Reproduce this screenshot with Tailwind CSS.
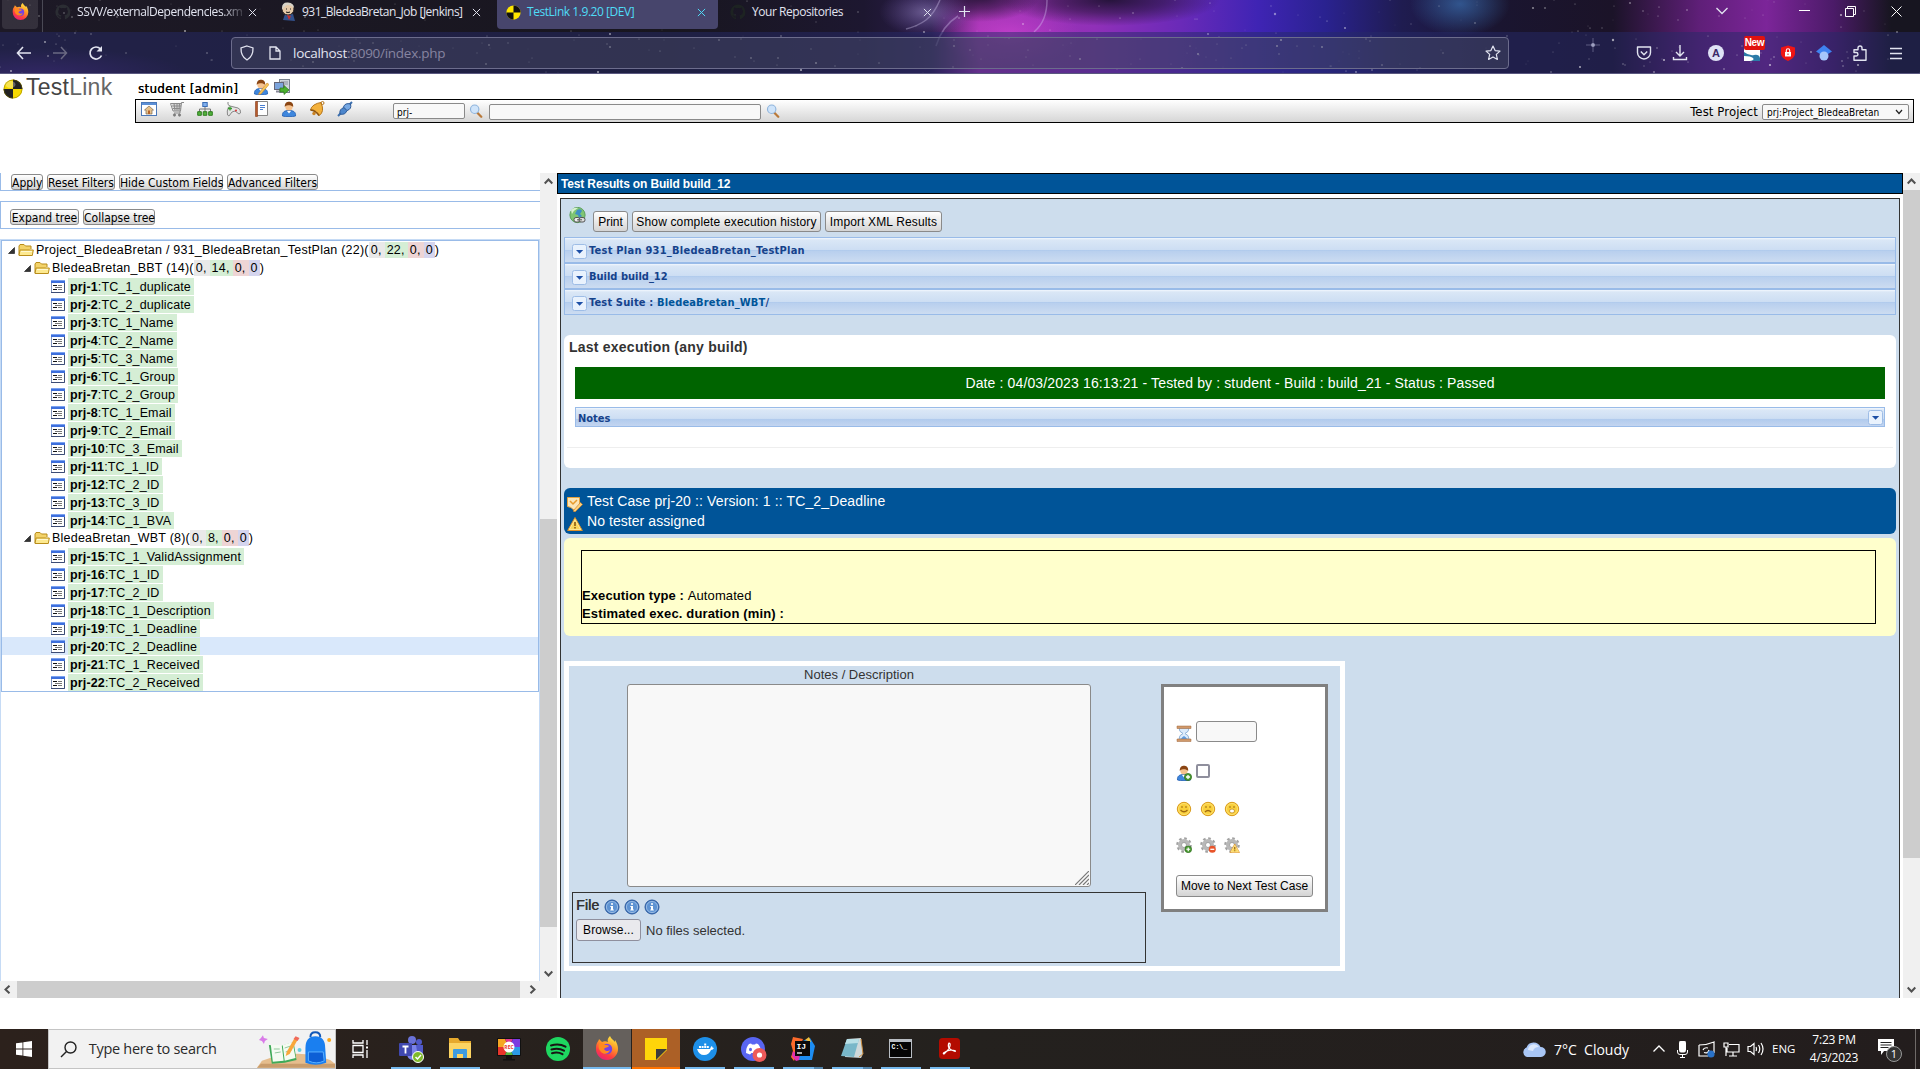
<!DOCTYPE html>
<html lang="en">
<head>
<meta charset="utf-8">
<title>TestLink 1.9.20 [DEV]</title>
<script src="https://cdn.jsdelivr.net/npm/@tailwindcss/browser@4"></script>
</head>
<body class="h-[1069px] w-[1920px] overflow-hidden bg-white font-['Liberation_Sans',Arial,sans-serif] text-black">
<svg class="absolute size-0">
  <defs><linearGradient id="ffg" x1=".8" y1="0" x2=".3" y2="1"><stop offset="0" stop-color="#fff04a"/><stop offset=".4" stop-color="#ff9a26"/><stop offset=".75" stop-color="#ff3d3f"/><stop offset="1" stop-color="#e5227b"/></linearGradient></defs>
  <symbol id="ff" viewBox="0 0 24 24"><path fill="url(#ffg)" d="M2 7c1-2 2-3 2-4 1 1 2 2 3 3 2-1 4-1 6 0-1-2 0-4 2-6 1 3 4 4 5 6V4c2 3 3 6 3 9a11 11 0 0 1-22 0c0-2 0-4 1-6z"/><circle cx="12" cy="13" r="5.200" fill="#7543e3"/><path fill="#ff8a1e" d="M4 8c3-1 5 0 6 1 2 0 3 0 4 1-1 2-4 1-5 3 1 2 4 3 6 1-1 4-6 5-9 2-2-2-3-5-2-8z"/></symbol>
  <symbol id="gh" viewBox="0 0 16 16"><path fill="currentColor" d="M8 .5a7.600 7.600 0 0 0-2.400 14.800c.4 0 .5-.2.5-.4v-1.400c-2.100.4-2.600-1-2.600-1-.3-.9-.8-1.100-.8-1.100-.7-.5 0-.5 0-.5.8 0 1.200.8 1.200.8.7 1.200 1.800.9 2.200.7 0-.5.3-.9.5-1-1.700-.3-3.400-.9-3.400-3.900 0-.8.3-1.500.8-2 0-.3-.3-1 .1-2.100 0 0 .6-.2 2.100.8a7 7 0 0 1 3.800 0c1.400-1 2-.8 2-.8.4 1.100.2 1.800.1 2.100.5.5.8 1.200.8 2 0 3-1.800 3.600-3.500 3.800.3.300.5.800.5 1.500v2c0 .3.100.500.500.400A7.600 7.600 0 0 0 8 .5z"/></symbol>
  <symbol id="tl" viewBox="0 0 20 20"><circle cx="10" cy="10" r="9.500" fill="#ffe600"/><path d="M10 10V.5A9.500 9.500 0 0 1 19.500 10zM10 10v9.500A9.500 9.500 0 0 1 .5 10z" fill="#111"/></symbol>
  <symbol id="tlx" viewBox="0 0 20 20"><circle cx="10" cy="10" r="9.500" fill="#f5d800"/><path d="M10 10V.5A9.500 9.500 0 0 1 19.500 10zM10 10v9.500A9.500 9.500 0 0 1 .5 10z" fill="#222"/><ellipse cx="7.500" cy="5.500" rx="5" ry="3.500" fill="#fff" opacity=".3"/><circle cx="10" cy="10" r="9" fill="none" stroke="#6d6100" stroke-opacity=".4"/></symbol>
  <symbol id="x" viewBox="0 0 10 10"><path d="M1 1l8 8M9 1l-8 8" stroke="currentColor" stroke-width="1.100" fill="none"/></symbol>
  <symbol id="user" viewBox="0 0 16 16"><path d="M1.500 15c-.5-4 2-5.500 6.500-5.500s7 1.500 6.500 5.500c-3 1-10 1-13 0z" fill="#3f87dd" stroke="#1d5bb0" stroke-width=".8"/><path d="M6 10l2 2.500 2-2.500z" fill="#fff"/><circle cx="8" cy="5.800" r="3.700" fill="#f6c28e"/><path d="M3.800 6C3.500 2 6 .8 8 .8s4.500 1 4.200 5.200C11 4.500 9 4 7 4.200 5.500 4.300 4.500 5 3.800 6z" fill="#8a4513"/></symbol>
  <symbol id="mag" viewBox="0 0 16 16"><path d="M9.500 10l4.500 4.500" stroke="#b9793a" stroke-width="2.600" stroke-linecap="round"/><circle cx="6.500" cy="6" r="4.800" fill="#cfe4fa" stroke="#8fb4dc" stroke-width="1.300"/></symbol>
  <symbol id="folder" viewBox="0 0 16 14"><path d="M1 12V3l1-1.500h4L7.500 3H13v3" fill="#f3d36a" stroke="#b98d1a"/><path d="M1 12.500l1-5.500h13.300l-1 5.500z" fill="#fde98f" stroke="#b98d1a"/><path d="M3 8.500h11" stroke="#fff8d0"/></symbol>
  <symbol id="leaf" viewBox="0 0 14 13"><path d="M.5.500h13v12H.5z" fill="#fff" stroke="#8295bd"/><path d="M0 0h14v1H0z" fill="#7ba2f0"/><path d="M0 1h14v2H0z" fill="#3d6fdc"/><path d="M13.500 3v9.500H0" fill="none" stroke="#3c4c75"/><path d="M2 5.500h4M2 9.500h4" stroke="#111"/><path d="M7 5.500h4M4 7.500h7M7 9.500h4" stroke="#777"/></symbol>
  <symbol id="tri" viewBox="0 0 7 7"><path d="M6.500.5v6h-6z" fill="#333" stroke="#111" stroke-width=".6"/></symbol>
  <symbol id="tool" viewBox="0 0 15 15"><rect x=".5" y=".5" width="14" height="14" rx="2" fill="#e9f2fd" stroke="#9ebde6"/><path d="M4 6h7.200L7.600 9.800z" fill="#1d4fa6"/></symbol>
  <symbol id="info" viewBox="0 0 16 16"><circle cx="8" cy="8" r="7" fill="#4a80c4" stroke="#2c5a9e"/><circle cx="8" cy="8" r="5.600" fill="#5e93d2" stroke="#a9c7ea" stroke-width=".8"/><path d="M7 4.200h2v1.600H7zM6.300 7H9v3.500h.8v1H6.300v-1H7V8h-.7z" fill="#fff"/></symbol>
  <symbol id="gear" viewBox="0 0 16 16"><g fill="none" stroke="#a2a2a2"><circle cx="8" cy="8" r="6.600" stroke-width="2.400" stroke-dasharray="2.600 2.580"/><circle cx="8" cy="8" r="4.300" stroke="#b8b8b8" stroke-width="3.400"/><circle cx="8" cy="8" r="2.500" stroke="#888" stroke-width=".7"/></g></symbol>
  <symbol id="face" viewBox="0 0 16 16"><circle cx="8" cy="8" r="6.700" fill="#f9cf3a" stroke="#d99a1b"/><circle cx="8" cy="8" r="5.500" fill="none" stroke="#fde37e" stroke-width=".8"/><path d="M6 5v2M10 5v2" stroke="#a87718" stroke-width="1.100"/></symbol>
  <symbol id="warn" viewBox="0 0 16 16"><path d="M8 1.500L15.300 14.500H.7z" fill="#fbd65a" stroke="#e0932a" stroke-linejoin="round"/><path d="M8 3.500L13.600 13.500H2.400z" fill="none" stroke="#fff0b5" stroke-width=".7"/><path d="M7.200 6h1.600v4H7.200zM7.200 11h1.600v1.400H7.200z" fill="#8a5a12"/></symbol>
  <symbol id="plus" viewBox="0 0 8 8"><circle cx="4" cy="4" r="3.600" fill="#4b9a32" stroke="#2e6d1d" stroke-width=".7"/><path d="M4 2v4M2 4h4" stroke="#fff" stroke-width="1.300"/></symbol>
</svg>

<!-- Browser chrome -->
<header class="relative h-[74px] w-full overflow-hidden bg-[#17151f] text-[#e2e4f0]">
  <svg class="absolute inset-0" width="1920" height="74">
    <defs>
      <linearGradient id="sky" x1="0" x2="1920" y1="0" y2="0" gradientUnits="userSpaceOnUse">
        <stop offset="0" stop-color="#1d1926"/><stop offset=".35" stop-color="#18161f"/><stop offset=".45" stop-color="#1d1730"/><stop offset=".485" stop-color="#2b1c4a"/><stop offset=".51" stop-color="#a235b0"/><stop offset=".57" stop-color="#9030b8"/><stop offset=".615" stop-color="#6a2ab8"/><stop offset=".655" stop-color="#3f24b4"/><stop offset=".69" stop-color="#2a2290"/><stop offset=".73" stop-color="#1f1c50"/><stop offset=".78" stop-color="#1a1530"/><stop offset=".84" stop-color="#1b1328"/><stop offset=".885" stop-color="#5f1f78"/><stop offset=".92" stop-color="#7c2599"/><stop offset=".955" stop-color="#4b1b68"/><stop offset=".985" stop-color="#171520"/></linearGradient>
      <radialGradient id="glow"><stop offset="0" stop-color="#d645d8" stop-opacity=".6"/><stop offset="1" stop-color="#c33bd0" stop-opacity="0"/></radialGradient>
      <radialGradient id="dusk"><stop offset="0" stop-color="#150f26" stop-opacity=".85"/><stop offset=".5" stop-color="#150f26" stop-opacity=".5"/><stop offset="1" stop-color="#150f26" stop-opacity="0"/></radialGradient>
      <radialGradient id="lilac"><stop offset="0" stop-color="#b9a8e8" stop-opacity=".45"/><stop offset="1" stop-color="#8b6fd0" stop-opacity="0"/></radialGradient>
      <radialGradient id="teal"><stop offset="0" stop-color="#3a6fb0" stop-opacity=".7"/><stop offset="1" stop-color="#3a6fb0" stop-opacity="0"/></radialGradient>
      <radialGradient id="violet"><stop offset="0" stop-color="#4a2a78" stop-opacity=".7"/><stop offset="1" stop-color="#4a2a78" stop-opacity="0"/></radialGradient>
    </defs>
    <rect width="1920" height="74" fill="url(#sky)"/>
    <ellipse cx="40" cy="74" rx="150" ry="26" fill="url(#violet)"/>
    <ellipse cx="1010" cy="34" rx="70" ry="34" fill="url(#glow)"/>
    <ellipse cx="1110" cy="0" rx="110" ry="26" fill="url(#dusk)"/>
    <ellipse cx="980" cy="-4" rx="60" ry="26" fill="url(#dusk)"/>
    <ellipse cx="925" cy="12" rx="46" ry="24" fill="url(#lilac)"/>
    <ellipse cx="1460" cy="4" rx="50" ry="32" fill="url(#teal)"/>
    <path d="M940 0q-6 14-14 20t-20 9M958 16q-16 10-22 30M1047 0q0 10-3 18t-10 14" stroke="#d9cdf5" stroke-opacity=".35" fill="none" stroke-width="1.500"/>
    <rect y="32" width="1920" height="42" fill="#252968" fill-opacity=".5"/>
    <g id="stars" fill="#fff"></g>
    <path d="M1593 38v14M1586 45h14" stroke="#cfd2ee" stroke-opacity=".35"/><circle cx="1593" cy="45" r="2" fill="#cfd2ee" opacity=".6"/>
    <rect y="73" width="1920" height="1" fill="#5a5880"/>
  </svg>
  <div class="relative flex h-8 items-start text-[12px] tracking-[-0.45px] font-['Open_Sans','Noto_Sans',sans-serif]">
    <div class="ml-[2px] flex h-[29px] w-9 items-center justify-center rounded-b bg-white/10 pb-[7px]"><svg width="17" height="17"><use href="#ff"/></svg></div>
    <div class="ml-1 h-8 w-px bg-[#4a4955]"></div>
    <div class="flex h-6 w-[225px] items-center pl-3"><svg class="text-[#2b2d33]" width="16" height="16"><use href="#gh"/></svg><span class="ml-[6px] w-[170px] whitespace-nowrap mask-r-from-85%">SSVV/externalDependencies.xm</span><svg class="ml-[1px]" width="9" height="9"><use href="#x"/></svg></div>
    <div class="flex h-6 w-[229px] items-center pl-[12px]">
      <svg width="16" height="20" viewBox="0 0 16 20"><path d="M3 18l2-6h8l2 7z" fill="#33518c"/><circle cx="8" cy="7" r="6" fill="#e6c9a8" stroke="#2b2320"/><path d="M2 6q0-6 6-5.500T14 6q-3-3-6-3T2 8z" fill="#d8d3c8"/><path d="M6 7h1M10 7h1M6 10q2 1 4 0" stroke="#222"/><path d="M7 13l4 1-2 4z" fill="#c9302c"/></svg>
      <span class="ml-[6px] w-[165px] tracking-[-0.5px] whitespace-nowrap">931_BledeaBretan_Job [Jenkins]</span><svg class="ml-[5px]" width="9" height="9"><use href="#x"/></svg></div>
    <div class="flex h-[29px] w-[221px] items-center rounded-b bg-[#47456c] pb-[5px] pl-[9px] text-[#4fdcf7]"><svg width="15" height="15"><use href="#tl"/></svg><span class="ml-[6px] w-[170px] whitespace-nowrap">TestLink 1.9.20 [DEV]</span><svg width="9" height="9"><use href="#x"/></svg></div>
    <div class="flex h-6 w-[225px] items-center pl-3"><svg class="text-[#1d2322]" width="16" height="16"><use href="#gh"/></svg><span class="ml-[6px] w-[171px] whitespace-nowrap">Your Repositories</span><svg width="9" height="9"><use href="#x"/></svg></div>
    <svg class="ml-[16px] mt-[6px]" width="11" height="11"><path d="M5.500 0v11M0 5.500h11" stroke="#e2e4f0" stroke-width="1.200"/></svg>
    <svg class="ml-[746px] mt-[7px]" width="12" height="8"><path d="M.5 1L6 6.500 11.500 1" fill="none" stroke="currentColor" stroke-width="1.300"/></svg>
    <svg class="ml-[71px] mt-[10px]" width="11" height="2"><path d="M0 .5h11" stroke="#fff"/></svg>
    <svg class="ml-[35px] mt-[6px]" width="11" height="11"><path d="M.5 2.500h8v8h-8zM2.500 2.500v-2h8v8h-2" fill="none" stroke="#fff"/></svg>
    <svg class="ml-[35px] mt-[6px]" width="11" height="11"><path d="M.5.500l10 10M10.500.500l-10 10" stroke="#fff"/></svg>
  </div>
  <div class="relative flex h-[42px] items-center">
    <svg class="ml-[16px]" width="15" height="14" fill="none" stroke="currentColor" stroke-width="1.600"><path d="M15 7H1.500M7 1L1.500 7 7 13"/></svg>
    <svg class="ml-[22px] text-[#6a6982]" width="15" height="14" fill="none" stroke="currentColor" stroke-width="1.500"><path d="M0 7h13.500M8 1l5.500 6L8 13"/></svg>
    <svg class="ml-[20px]" width="16" height="16" fill="none" stroke="currentColor" stroke-width="1.700"><path d="M13.500 10.500A6 6 0 1 1 12.500 4"/><path d="M14 1v5.500H8.500z" fill="currentColor" stroke="none"/></svg>
    <div class="ml-[127px] flex h-8 w-[1278px] items-center rounded-[4px] border border-[#6c6c8c] bg-[#4a4b63]/45 pl-[8px]">
      <svg width="14" height="16" viewBox="0 0 14 16" fill="none" stroke="currentColor" stroke-width="1.300"><path d="M7 1l6 2c.2 5-1 9-6 12C2 12 .8 8 1 3z"/></svg>
      <svg class="ml-[15px]" width="12" height="14" fill="none" stroke="currentColor" stroke-width="1.300"><path d="M1 1h6l4 4v8H1zM7 1v4h4"/></svg>
      <span class="ml-[12px] w-[1192px] pt-px text-[13.5px] tracking-[-0.28px] text-[#8684a0] font-['Open_Sans','Noto_Sans',sans-serif]"><span class="text-[#e2e4f0]">localhost</span>:8090/index.php</span>
      <svg width="16" height="16" viewBox="0 0 16 16" fill="none" stroke="currentColor" stroke-width="1.200"><path d="M8 1l2.100 4.600 4.900.5-3.700 3.300 1.100 5L8 11.900l-4.400 2.500 1.100-5L1 6.100l4.900-.5z" stroke-linejoin="round"/></svg>
    </div>
    <div class="ml-[127px] flex items-center gap-[20px]">
      <svg width="16" height="16" fill="none" stroke="currentColor" stroke-width="1.400"><path d="M1.500 2h13v5.500a6.500 6.500 0 0 1-13 0z" stroke-linejoin="round"/><path d="M4.800 6.500L8 9.700l3.200-3.200"/></svg>
      <svg width="16" height="16" fill="none" stroke="currentColor" stroke-width="1.400"><path d="M8 0v10.500M4 7l4 4 4-4M1.500 12v2.500h13V12"/></svg>
      <div class="flex size-4 items-center justify-center rounded-full bg-[#dfe2f5] text-[11px] font-bold text-[#3b2a68]">A</div>
      <div class="relative size-4 bg-white"><svg width="16" height="16"><path d="M0 7q5 4 10 3t6 3v3H6q5-1 3-3t-9-2z" fill="#2c7ba8"/></svg><div class="absolute -top-[9px] left-0 h-[14px] w-[21px] rounded-[2px] bg-[#e0120f] text-center text-[10px] leading-[14px] font-bold tracking-[-0.3px] text-white">New</div></div>
      <svg width="16" height="16"><path d="M1 2.500l7-2 7 2v6c0 3-3 6-7 7.500-4-1.500-7-4.500-7-7.500z" fill="#f01414"/><path d="M5 7h6v4.500H5z" fill="#fff"/><path d="M6.300 7V5.500a1.700 1.700 0 0 1 3.400 0V7" fill="none" stroke="#fff" stroke-width="1.100"/><path d="M7.500 8.500h1v1.500h-1z" fill="#f01414"/></svg>
      <svg width="16" height="16"><path d="M8 0l8 6.500-8 5-8-5z" fill="#3f82f0"/><circle cx="8" cy="11" r="4.500" fill="#a6c6fb"/></svg>
      <svg width="16" height="16" fill="none" stroke="currentColor" stroke-width="1.400"><path d="M2 15.200V11h2.200a1.700 1.700 0 0 0 0-3.500H2V4.800h4V3a2 2 0 0 1 4 0v1.800h4v10.400z" stroke-linejoin="round"/></svg>
      <svg width="13" height="13" class="ml-[2px]" stroke="currentColor" stroke-width="1.300"><path d="M0 1.500h12M0 6.500h12M0 11.500h12"/></svg>
    </div>
  </div>
</header>

<!-- TestLink title bar -->
<section class="flex h-[99px] font-['DejaVu_Sans_Condensed','DejaVu_Sans',sans-serif]">
  <div class="flex h-[30px] w-[135px] items-center pl-[3px]">
    <svg width="20" height="20"><use href="#tlx"/></svg>
    <span class="ml-[3px] -mt-[3px] text-[23px] leading-none tracking-[0.25px] text-[#444] font-['Liberation_Sans',sans-serif]">Test<span class="text-[#666]">Link</span></span>
  </div>
  <div class="w-[1779px]">
    <div class="flex h-[25px] items-center pl-[3px] text-[13px]">
      <span class="w-[115px] pt-[4px] tracking-[0.4px] whitespace-nowrap [text-shadow:.3px_0_0_#000]">student [admin]</span>
      <svg width="16" height="16"><use href="#user"/><path d="M6 14l8-10 2 1.500-8 9.500-2.500.5z" fill="#f8c85a" stroke="#c9802b" stroke-width=".6"/></svg>
      <svg class="ml-[5px]" width="16" height="16"><rect x="5.500" y=".5" width="10" height="13" fill="#cfd5dc" stroke="#79828e"/><path d="M7 3h7M7 5h7" stroke="#8a93a0"/><rect x=".5" y="3.500" width="9" height="7" fill="#7ba4dc" stroke="#667"/><path d="M2 12.500h7" stroke="#889" stroke-width="2"/><path d="M6 9h4V6.500l5 4.500-5 4.500V13H6z" fill="#4bb02f" stroke="#2c7a1a" stroke-width=".7"/></svg>
    </div>
    <div class="flex h-[24px] items-center border border-black bg-linear-to-b from-white to-[#d6d6d6]">
      <div class="flex w-[257px] items-center gap-[12px] pb-[4px] pl-[5px]">
        <svg width="16" height="16"><rect x=".5" y="1.500" width="15" height="13" fill="#fff" stroke="#4b78b8"/><path d="M1 2h14v2H1z" fill="#5b8fd6"/><path d="M8 5l4.500 4H11v4H5V9H3.500z" fill="#e6c08a" stroke="#7d6a50" stroke-width=".7"/><path d="M7 9.500h2V13H7z" fill="#b5652a"/></svg>
        <svg width="16" height="16" fill="none" stroke="#8a8a8a"><path d="M3 2.500h9.500L11.500 10H5z" fill="#d5d5d5" stroke="none"/><path d="M15 1.500h-2.500L11.500 10H4L1.500 2.500h11"/><path d="M3 5h9M3.500 7.500h8M5 2.500l1 7M8 2.500v7M10.500 2.500l-.5 7M11 10v2H5"/><circle cx="5.500" cy="14" r="1.200" fill="#777"/><circle cx="10.500" cy="14" r="1.200" fill="#777"/></svg>
        <svg width="16" height="16"><path d="M8 5v3M2.500 11V8h11v3M8 8v3" stroke="#777" fill="none"/><rect x="5.800" y="1.500" width="4.400" height="4" fill="#7fb0ee" stroke="#3a6cb4"/><path d="M.7 10.700h3.600v3.600H.7zM6.200 10.700h3.600v3.600H6.200zM11.700 10.700h3.600v3.600h-3.600z" fill="#52b33c" stroke="#2f7d1f"/></svg>
        <svg width="16" height="16"><path d="M3 1q-1 3 2 4l8 2q3 1 2.500 5l-1.500 1-4-3-3 1-3 4-1.500-1q-1-4 1-8" fill="#e4e4e4" stroke="#888"/><path d="M3 7.500h4M5 5.500v4" stroke="#3a9a2f" stroke-width="1.300"/><circle cx="11" cy="9.500" r="1" fill="#d33"/></svg>
        <svg width="16" height="16"><path d="M3.500.5h11v14h-11z" fill="#fff" stroke="#888"/><path d="M2.500.5h2v15h-2z" fill="#b55b2e" stroke="#8a3d18" stroke-width=".6"/><path d="M7 4.500h5M7 6.500h5M7 8.500h3" stroke="#4a7fd0"/></svg>
        <svg width="16" height="16"><use href="#user"/></svg>
        <svg width="16" height="16"><path d="M12 1.500q-4 .5-7 2.500T1.500 9q3-.5 5.500 1.500t3 4q3-1.500 3.500-5T12 1.500z" fill="#f3b13c" stroke="#b4741b"/><path d="M1.500 9q5 .5 8.500 5.500" stroke="#8d5510" fill="none" stroke-width="1.500"/><circle cx="5" cy="12.500" r="1.700" fill="#c98222"/><circle cx="13.500" cy="2" r="1.500" fill="none" stroke="#b4741b"/></svg>
        <svg width="16" height="16"><path d="M1 15l3-3m8-8l3-3" stroke="#3c6fae" stroke-width="2"/><path d="M3 13q-1-5 4-6.500l3 3q-2 5-7 3.500z" fill="#4c86cc" stroke="#2c5a98"/><path d="M6.500 6Q8 1.500 13.500 3q1.500 5-3.500 6.500z" fill="#77a9e4" stroke="#2c5a98"/></svg>
      </div>
      <div class="flex h-4 w-[72px] items-center rounded-[2px] border border-[#8a8a8a] bg-[#f8f8f8] pt-[2px] pl-[3px] text-[10px]">prj-</div>
      <svg class="ml-[4px] mr-[6px]" width="14" height="14"><use href="#mag"/></svg>
      <div class="mt-px h-4 w-[272px] rounded-[2px] border border-[#8a8a8a] bg-[#f8f8f8]"></div>
      <svg class="ml-[5px]" width="14" height="14"><use href="#mag"/></svg>
      <span class="mt-[2px] ml-auto text-[13px] tracking-[0.1px]">Test Project</span>
      <div class="mt-px mr-[4px] ml-[4px] flex h-4 w-[147px] items-center justify-between rounded-[2px] border border-[#8a8a8a] bg-[#f8f8f8] pr-[5px] pl-[4px] text-[10px] tracking-[0.05px]"><span class="pt-px">prj:Project_BledeaBretan</span><svg width="8" height="6"><path d="M1 1l3 3.500L7 1" fill="none" stroke="#222" stroke-width="1.200"/></svg></div>
    </div>
  </div>
</section>

<main class="flex h-[856px]">
  <!-- Test plan tree -->
  <section class="w-[557px]">
    <div class="flex h-[808px]">
      <div class="w-[540px] text-[12px]">
        <div class="flex h-[18px] gap-[4px] border-b border-l border-[#99bbe8] pt-px pl-[10px] font-['DejaVu_Sans_Condensed','DejaVu_Sans',sans-serif]">
          <button class="h-4 w-[32px] rounded-[3px] border border-[#8a8a8a] bg-linear-to-b from-white to-[#d4d4d4] leading-[16px] whitespace-nowrap">Apply</button>
          <button class="h-4 w-[68px] rounded-[3px] border border-[#8a8a8a] bg-linear-to-b from-white to-[#d4d4d4] leading-[16px] whitespace-nowrap">Reset Filters</button>
          <button class="h-4 w-[104px] rounded-[3px] border border-[#8a8a8a] bg-linear-to-b from-white to-[#d4d4d4] leading-[16px] whitespace-nowrap">Hide Custom Fields</button>
          <button class="h-4 w-[91px] rounded-[3px] border border-[#8a8a8a] bg-linear-to-b from-white to-[#d4d4d4] leading-[16px] whitespace-nowrap">Advanced Filters</button>
        </div>
        <div class="mt-[10px] flex h-[28px] gap-[4px] border-y border-l border-[#99bbe8] pt-[7px] pl-[9px] font-['DejaVu_Sans_Condensed','DejaVu_Sans',sans-serif]">
          <button class="h-4 w-[69px] rounded-[3px] border border-[#8a8a8a] bg-linear-to-b from-white to-[#d4d4d4] leading-[16px] whitespace-nowrap">Expand tree</button>
          <button class="h-4 w-[72px] rounded-[3px] border border-[#8a8a8a] bg-linear-to-b from-white to-[#d4d4d4] leading-[16px] whitespace-nowrap">Collapse tree</button>
        </div>
        <div class="mt-[10px] h-[742px] border-x border-t border-[#c6dbf5]">
          <div id="tree" class="border border-[#99bbe8] text-[12.5px]"></div>
        </div>
      </div>
      <div class="flex w-[17px] flex-col items-center bg-[#f0f0f0]">
        <svg class="mt-[5px]" width="9" height="7"><path d="M.7 5.500L4.500 1.500l3.800 4" fill="none" stroke="#505050" stroke-width="2"/></svg>
        <div class="mt-[334px] h-[408px] w-[17px] bg-[#cdcdcd]"></div>
        <svg class="mt-[43px]" width="9" height="7"><path d="M.7 1.500l3.800 4 3.800-4" fill="none" stroke="#505050" stroke-width="2"/></svg>
      </div>
    </div>
    <div class="flex h-[17px] items-center bg-[#f0f0f0]">
      <svg class="ml-[4px]" width="7" height="9"><path d="M5.500.7l-4 3.800 4 3.800" fill="none" stroke="#505050" stroke-width="2"/></svg>
      <div class="ml-[6px] h-[17px] w-[503px] bg-[#cdcdcd]"></div>
      <svg class="ml-[9px]" width="7" height="9"><path d="M1.500.7l4 3.800-4 3.800" fill="none" stroke="#505050" stroke-width="2"/></svg>
    </div>
  </section>

  <!-- Execution pane -->
  <section class="h-[825px] w-[1346px] overflow-hidden">
    <h1 class="h-[21px] border border-black bg-[#005498] pl-[3px] text-[12px] leading-[20px] font-bold tracking-[-0.15px] text-white">Test Results on Build build_12</h1>
    <div class="mt-[4px] mr-[3px] ml-[3px] h-[802px] border border-b-0 border-[#333] bg-[#cddded] px-[3px]">
      <div class="flex h-[38px] items-start pl-[5px] text-[12px]">
        <svg class="mt-[8px]" width="17" height="17" viewBox="0 0 17 17"><circle cx="8.500" cy="8" r="7.600" fill="#7fc573" stroke="#5a9e5a"/><path d="M8 3q4-2 5 1l-2 3 2 2-3 2-1-3-3-1z" fill="#3f8fc4"/><path d="M2 3q3-3 7-2Q5 3 3 7z" fill="#d6f0cf"/><rect x="5" y="10.500" width="6" height="4.500" rx="2" fill="#eee" stroke="#555"/><rect x="10" y="10.500" width="6" height="4.500" rx="2" fill="#ddd" stroke="#555"/><path d="M8 12.800h5" stroke="#555"/></svg>
        <button class="mt-[12px] ml-[7px] h-[21px] w-[35px] rounded-[3px] border border-[#8a8a8a] bg-linear-to-b from-white to-[#d4d4d4] leading-[20px]">Print</button>
        <button class="mt-[12px] ml-[4px] h-[21px] w-[189px] rounded-[3px] border border-[#8a8a8a] bg-linear-to-b from-white to-[#d4d4d4] leading-[20px] tracking-[0.16px]">Show complete execution history</button>
        <button class="mt-[12px] ml-[4px] h-[21px] w-[117px] rounded-[3px] border border-[#8a8a8a] bg-linear-to-b from-white to-[#d4d4d4] leading-[20px] tracking-[0.14px]">Import XML Results</button>
      </div>
      <div class="font-['DejaVu_Sans_Condensed','DejaVu_Sans',sans-serif] text-[11px] font-bold text-[#15428b]">
        <div class="flex h-[26px] items-center gap-[2px] border border-[#99bbe8] bg-[linear-gradient(#f2f7fd_0,#dae7f6_2px,#cddef3_48%,#abc7ec_50%,#b8cfee_54%,#ccdcf1_100%)] pt-[2px] pl-[7px]"><svg width="15" height="15"><use href="#tool"/></svg><span class="tracking-[0.25px]">Test Plan 931_BledeaBretan_TestPlan</span></div>
        <div class="flex h-[26px] items-center gap-[2px] border border-[#99bbe8] bg-[linear-gradient(#f2f7fd_0,#dae7f6_2px,#cddef3_48%,#abc7ec_50%,#b8cfee_54%,#ccdcf1_100%)] pt-[2px] pl-[7px]"><svg width="15" height="15"><use href="#tool"/></svg><span>Build build_12</span></div>
        <div class="flex h-[26px] items-center gap-[2px] border border-[#99bbe8] bg-[linear-gradient(#f2f7fd_0,#dae7f6_2px,#cddef3_48%,#abc7ec_50%,#b8cfee_54%,#ccdcf1_100%)] pt-[2px] pl-[7px]"><svg width="15" height="15"><use href="#tool"/></svg><span class="tracking-[0.16px]">Test Suite : <span class="text-[#005498]">BledeaBretan_WBT</span>/</span></div>
      </div>
      <div class="mt-[20px] h-[133px] rounded-[6px] bg-white px-[3px]">
        <h2 class="h-[32px] pl-[2px] text-[14px] leading-[25px] font-bold tracking-[0.23px] text-[#333]">Last execution (any build)</h2>
        <div class="mx-[8px] h-[32px] bg-[#006400] text-center text-[14px] leading-[32px] tracking-[0.13px] text-white">Date : 04/03/2023 16:13:21 - Tested by : student - Build : build_21 - Status : Passed</div>
        <div class="mx-[8px] mt-[8px] flex h-[20px] items-center justify-between border border-[#99bbe8] bg-[linear-gradient(#f2f7fd_0,#dae7f6_2px,#cddef3_58%,#b0caed_62%,#c3d5f0_100%)] pt-px pr-px pl-[2px] font-['DejaVu_Sans_Condensed','DejaVu_Sans',sans-serif] text-[11px] font-bold text-[#15428b]"><span class="mt-[3px]">Notes</span><svg width="15" height="15"><use href="#tool"/></svg></div>
        <div class="mt-[20px] h-px bg-[#eee]"></div>
      </div>
      <div class="mt-[20px] h-[46px] rounded-[6px] bg-[#005498] pt-[3px] pl-[3px] text-[14px] text-white">
        <div class="flex h-[20px] items-center"><svg class="mt-[5px]" width="16" height="16"><path d="M.5 1.500h12v8l-3.500 4h-3l-2-2-3.500-1z" fill="#fbe6b8" stroke="#e8a33c"/><path d="M3 5l3 3 4-4" stroke="#e79a2c" fill="none" stroke-width="1.500"/><path d="M6 15l7.500-8.500 2 2L8 16z" fill="#ffd27a" stroke="#c9802b" stroke-width=".7"/></svg><span class="ml-[4px] tracking-[0.13px]">Test Case prj-20 :: Version: 1 :: TC_2_Deadline</span></div>
        <div class="flex h-[20px] items-center"><svg class="mt-[5px]" width="16" height="16"><use href="#warn"/></svg><span class="ml-[4px] tracking-[0.06px]">No tester assigned</span></div>
      </div>
      <div class="mt-[4px] h-[98px] rounded-[6px] bg-[#ffffcc] py-[12px] pr-[20px] pl-[17px]">
        <div class="h-[74px] border border-black pt-[36px] text-[13px] leading-[18px]">
          <div><span class="font-bold tracking-[0.1px]">Execution type : </span><span class="tracking-[0.1px]">Automated</span></div>
          <div class="font-bold tracking-[0.15px]">Estimated exec. duration (min) :</div>
        </div>
      </div>
      <div class="mt-[25px] flex h-[310px] w-[781px] border-[5px] border-white pl-[3px] text-[#333]">
        <div class="w-[574px]">
          <div class="h-[18px] text-center text-[13px] leading-[18px]">Notes / Description</div>
          <div class="mx-[55px] flex h-[203px] items-end justify-end rounded-[3px] border border-[#8a8a8a] bg-[#f8f8f8] p-px"><svg width="14" height="14" stroke="#777" stroke-width="1.200"><path d="M0 14L14 0M4 14L14 4M8 14l6-6M12 14l2-2"/></svg></div>
          <div class="mt-[5px] h-[71px] border border-[#333] pt-[2px] pl-[3px]">
            <div class="flex h-[21px] items-center gap-[4px] text-[14px]"><span class="mr-px tracking-[0.2px] [text-shadow:.4px_0_0_#333]">File</span><svg class="mt-[3px]" width="16" height="16"><use href="#info"/></svg><svg class="mt-[3px]" width="16" height="16"><use href="#info"/></svg><svg class="mt-[3px]" width="16" height="16"><use href="#info"/></svg></div>
            <div class="mt-[3px] flex items-center text-[13px]"><button class="h-[22px] w-[65px] rounded-[3px] border border-[#8f8f9d] bg-[#e9e9ed] pt-px text-[12px] leading-[19px] tracking-[0.1px] text-black">Browse...</button><span class="mt-px ml-[5px]">No files selected.</span></div>
          </div>
        </div>
        <div class="mt-[18px] ml-[15px] flex h-[228px] w-[167px] flex-col border-[3px] border-[#808080] bg-white pl-[12px]">
          <div class="mt-[34px] flex h-[21px] items-center"><svg class="mt-[4px]" width="16" height="17"><path d="M3 3h10q0 4-4 5.500 4 1.500 4 5.500H3q0-4 4-5.500-4-1.500-4-5.500z" fill="#dcebfb" stroke="#8fb2d8"/><path d="M5 14q1-2 3-3 2 1 3 3z" fill="#5d9be0"/><path d="M1 1h14v2.500H1zM1 14h14v2.500H1z" fill="#d0996b" stroke="#a0673a" stroke-width=".5"/></svg><div class="ml-[4px] h-[21px] w-[61px] rounded-[3px] border border-[#8a8a8a] bg-[#f8f8f8]"></div></div>
          <div class="mt-[22px] flex h-[17px] items-start"><svg class="mt-[1px]" width="16" height="16"><use href="#user"/><use href="#plus" x="8" y="8" width="8" height="8"/></svg><div class="ml-[4px] size-[14px] rounded-[2px] border-2 border-[#8f8f9d]"></div></div>
          <div class="mt-[20px] flex gap-[8px]">
            <svg width="16" height="16"><use href="#face"/><path d="M4.500 9q3.500 3.500 7 0" stroke="#a06a10" fill="none" stroke-width="1.300"/></svg>
            <svg width="16" height="16"><use href="#face"/><path d="M5 11q3-3 6 0" stroke="#a06a10" fill="none" stroke-width="1.300"/></svg>
            <svg width="16" height="16"><use href="#face"/><ellipse cx="8" cy="10" rx="2.500" ry="2" fill="#fff" stroke="#c08a20" stroke-width=".8"/></svg>
          </div>
          <div class="mt-[20px] flex gap-[8px]">
            <svg width="16" height="16"><use href="#gear"/><use href="#plus" x="8.500" y="8.500" width="7.500" height="7.500"/></svg>
            <svg width="16" height="16"><use href="#gear"/><circle cx="12.300" cy="12.300" r="3.500" fill="#e8542a"/><path d="M10.300 12.300h4" stroke="#fff" stroke-width="1.300"/></svg>
            <svg width="16" height="16"><use href="#gear"/><use href="#warn" x="5.500" y="6" width="10.500" height="10.500"/></svg>
          </div>
          <button class="mt-[22px] h-[22px] w-[137px] rounded-[3px] border border-[#8a8a8a] bg-linear-to-b from-white to-[#d4d4d4] text-[12px] leading-[21px] text-black">Move to Next Test Case</button>
        </div>
      </div>
    </div>
  </section>
  <div class="flex h-[825px] w-[17px] flex-col items-center bg-[#f0f0f0]">
    <svg class="mt-[5px]" width="9" height="7"><path d="M.7 5.500L4.500 1.500l3.800 4" fill="none" stroke="#505050" stroke-width="2"/></svg>
    <div class="mt-[5px] h-[668px] w-[17px] bg-[#cdcdcd]"></div>
    <svg class="mt-[128px]" width="9" height="7"><path d="M.7 1.500l3.800 4 3.800-4" fill="none" stroke="#505050" stroke-width="2"/></svg>
  </div>
</main>

<!-- Taskbar -->
<footer class="flex h-[40px] items-stretch bg-linear-to-r from-[#2c211c] via-[#24211e] to-[#231d1d] font-['Open_Sans','Noto_Sans',sans-serif] text-white">
  <div class="flex w-[48px] items-center justify-center"><svg width="16" height="16" fill="#fff"><path d="M0 2.300L6.500 1.400v6.200H0zM7.300 1.300L16 0v7.600H7.300zM0 8.400h6.500v6.200L0 13.700zM7.300 8.400H16V16l-8.700-1.300z"/></svg></div>
  <div class="flex w-[288px] items-center border border-[#c4c4c4] bg-[#f2f2f2] pl-[11px] text-[#2b2b2b]">
    <svg width="17" height="17" fill="none" stroke="#222" stroke-width="1.400"><circle cx="10.500" cy="6.500" r="5.500"/><path d="M6.500 10.500L1 16"/></svg>
    <span class="ml-[12px] w-[170px] text-[14.5px] tracking-[-0.3px] whitespace-nowrap">Type here to search</span>
    <svg width="79" height="38" viewBox="0 0 79 38"><path d="M0 38l5-7q35-14 69-1l5 4v4z" fill="#e5bd8d"/><path d="M0 38l4-4h75v4z" fill="#c99c6b"/><path d="M12 15l12 1 13-4 3 18-12 3-13 1z" fill="#3faa58"/><path d="M14 15l11 0 2 16-11 1zM26 15l10-3 3 16-11 3z" fill="#f5fbf2"/><path d="M17 19l6 0M18 23l6-1M28 18l6-2M29 22l6-2" stroke="#8fc79b"/><path d="M30 22L38 8l3 2-8 14-4 2z" fill="#f9a73a"/><path d="M37 9l2-3 4 2-2 3z" fill="#f06a5a"/><path d="M49 18q0-12 10-12t10 12l1 15q-11 4-21 0z" fill="#1a7ff0"/><path d="M54 7q0-5 5-5t5 5" stroke="#1158b8" fill="none" stroke-width="2"/><path d="M52 22h15l1 9q-8 4-16 0z" fill="#0d5fd6" stroke="#59b0ff"/><path d="M4 8l2-3 1 3 4 1-3 2-1 3-2-3-3-1z" fill="#d97be8"/><circle cx="43" cy="20" r="2" fill="#67cfe0"/><circle cx="73" cy="10" r="2" fill="#f8a71c"/></svg>
  </div>
  <div class="flex w-[48px] items-center justify-center"><svg width="17" height="18" fill="none" stroke="#fff" stroke-width="1.300"><path d="M1 0v3h10V0M1 5.500h10v7H1zM1 18v-3h10v3M15 0v5M15 10v8"/><path d="M14 6.500h2v2h-2z" fill="#fff" stroke="none"/></svg></div>
  <div class="flex w-[54px] flex-col items-center justify-end"><svg class="mb-[4px]" width="26" height="28" viewBox="0 0 26 28"><circle cx="14" cy="5" r="4" fill="#6a72d8"/><circle cx="21" cy="7" r="3" fill="#5059c9"/><path d="M9 10h13v8q-1 7-7 7t-6-7z" fill="#7b83eb"/><path d="M18 10h7v8q-1 4-5 4z" fill="#5059c9"/><rect x="1" y="8" width="13" height="13" rx="1" fill="#4048b0"/><path d="M4.500 11.500h6M7.500 11.500v7" stroke="#fff" stroke-width="1.800"/><circle cx="20" cy="22" r="5.500" fill="#7fba2c" stroke="#fff"/><path d="M17.500 22l2 2 3.500-4" stroke="#fff" fill="none" stroke-width="1.500"/></svg><div class="h-[2px] w-[40px] bg-[#76b9ed]"></div></div>
  <div class="flex w-[44px] flex-col items-center justify-end"><svg class="mb-[8px]" width="24" height="22" viewBox="0 0 24 22"><path d="M1 1h9l2 3h11v17H1z" fill="#e6a92c"/><path d="M1 6h22v15H1z" fill="#fcd462"/><path d="M5 21v-8q0-1 1-1h12q1 0 1 1v8h-4v-4H9v4z" fill="#3d9be0"/></svg><div class="h-[2px] w-[40px] bg-[#76b9ed]"></div></div>
  <div class="flex w-[54px] items-center justify-center"><svg width="24" height="24" viewBox="0 0 24 24"><rect y="1" width="24" height="18" rx="1" fill="#111"/><path d="M1 2h7l4 8-11 0z" fill="#f5a623"/><path d="M8 2h8l-4 8z" fill="#e2398e"/><path d="M16 2h7v8H12z" fill="#7a3ae0"/><path d="M1 10h11l-4 8H1z" fill="#e8352b"/><path d="M12 10l4 8H8z" fill="#56b840"/><path d="M23 10H12l4 8h7z" fill="#2c9be6"/><circle cx="12" cy="10" r="5.500" fill="#fff"/><text x="12" y="12" font-size="5" font-weight="bold" text-anchor="middle" fill="#e8352b">REC</text><path d="M9 19h6v3H9zM6 22h12v1.500H6z" fill="#111"/></svg></div>
  <div class="flex w-[47px] items-center pl-[10px]"><svg width="24" height="24"><circle cx="12" cy="12" r="12" fill="#1ed760"/><path d="M5 8.500q8-2.500 14.500 1.200M5.500 12.500q7-2 12.500 1.200M6 16.200q6-1.600 10.500 1" stroke="#191414" stroke-width="2" fill="none" stroke-linecap="round"/></svg></div>
  <div class="flex w-[48px] flex-col items-center justify-end bg-[#65605c]"><svg class="mb-[7px]" width="24" height="24"><use href="#ff"/></svg><div class="h-[2px] w-[48px] bg-[#76b9ed]"></div></div>
  <div class="ml-px flex w-[48px] flex-col items-center justify-end bg-[#ac6026]"><svg class="mb-[7px]" width="22" height="22"><path d="M0 0h22v12L12 22H0z" fill="#ffd50a"/><path d="M22 11H11v11z" fill="#3c3c3c"/></svg><div class="h-[2px] w-[48px] bg-[#ff7300]"></div></div>
  <div class="flex w-[49px] flex-col items-center justify-end"><svg class="mb-[6px]" width="24" height="24"><circle cx="12" cy="12" r="12" fill="#1d8fe8"/><path d="M4 12h13q1-3 2-3 0 2 2 2-1 2-3 2-2 5-7 5t-7-6z" fill="#fff"/><path d="M6 9h2v2H6zM8.600 9h2v2h-2zM11.200 9h2v2h-2zM11.200 6.400h2v2h-2zM13.800 9h2v2h-2z" fill="#fff"/></svg><div class="h-[2px] w-[40px] bg-[#76b9ed]"></div></div>
  <div class="flex w-[49px] flex-col items-center justify-end"><svg class="mb-[5px]" width="26" height="25"><circle cx="12" cy="12" r="12" fill="#5865f2"/><path d="M5 16q0-6 3-9l2-.5 1 1h3l1-1 2 .5q3 3 3 9l-3 1.500-1.500-1.500h-5L9 17.500z" fill="#fff"/><ellipse cx="9.500" cy="12.500" rx="1.500" ry="1.800" fill="#5865f2"/><circle cx="18.500" cy="18" r="7" fill="#ed5a5a"/><circle cx="18.500" cy="18" r="2.600" fill="#fff"/></svg><div class="h-[2px] w-[40px] bg-[#76b9ed]"></div></div>
  <div class="flex w-[49px] flex-col items-center justify-end"><svg class="mb-[6px]" width="24" height="24"><path d="M2 0l10 2-9 22-3-4 2-6-2-7z" fill="#fc6a2b"/><path d="M2 14l10 8-7 2-4-5z" fill="#e02fb0"/><path d="M12 4l7-3 5 8-3 14H8z" fill="#1d8df2"/><path d="M14 3l4-3 2 5z" fill="#f7c33a"/><rect x="4" y="4" width="15" height="15" fill="#0a0a0a"/><text x="5.500" y="12" font-size="8" font-weight="bold" fill="#fff" font-family="Liberation Mono">IJ</text><path d="M6 16h5" stroke="#fff" stroke-width="1.300"/></svg><div class="flex h-[2px] w-[40px] justify-end bg-[#76b9ed]"><div class="w-[9px] bg-[#5384aa]"></div></div></div>
  <div class="flex w-[49px] flex-col items-center justify-end"><svg class="mb-[8px]" width="24" height="22"><path d="M7 2l14-1 2 16-2 4-16-1z" fill="#cfd8da"/><path d="M7 2l12 0-5 18-13-1z" fill="#79b7c9"/><path d="M7 2l12 0-1 4L5 7z" fill="#b8dfe6"/><path d="M21 2l2 15-4 3" fill="none" stroke="#c98a3c"/></svg><div class="flex h-[2px] w-[40px] justify-end bg-[#76b9ed]"><div class="w-[9px] bg-[#5384aa]"></div></div></div>
  <div class="flex w-[49px] flex-col items-center justify-end"><svg class="mb-[9px]" width="23" height="19"><rect width="23" height="19" fill="#b9bec4"/><rect x="1" y="3" width="21" height="15" fill="#050505"/><text x="2.500" y="10" font-size="6.500" fill="#fff" font-family="Liberation Mono" font-weight="bold">C:\_</text></svg><div class="h-[2px] w-[40px] bg-[#76b9ed]"></div></div>
  <div class="flex w-[49px] flex-col items-center justify-end"><svg class="mb-[8px]" width="21" height="21"><rect width="21" height="21" rx="3.500" fill="#b30b00"/><path d="M10 5q1.500 0 1 3t-6 8q-1 0-.5-1 2-2 8-3 4 0 4 1t-4-1-3-6z" fill="none" stroke="#fff" stroke-width="1.200"/></svg><div class="h-[2px] w-[40px] bg-[#76b9ed]"></div></div>

  <div class="ml-auto flex w-[946px] items-center pl-[548px] text-[14px]">
    <svg width="24" height="16"><path d="M5 16a5 5 0 0 1-.5-9.500A7.500 7.500 0 0 1 18.500 6 5 5 0 0 1 19 16z" fill="#a9c6f5"/><path d="M6 9a6 6 0 0 1 11-3q-5 0-6 4z" fill="#dbe8fc"/></svg>
    <span class="ml-[8px] w-[99px] whitespace-pre">7°C  Cloudy</span>
    <svg width="12" height="8"><path d="M.5 6.500L6 1l5.500 5.500" fill="none" stroke="#fff" stroke-width="1.300"/></svg>
    <svg class="ml-[12px]" width="11" height="17" fill="none" stroke="#fff"><rect x="2.500" y="0" width="6" height="11" rx="1.500" fill="#fff"/><path d="M.5 9v2q0 2.500 2.500 2.500h5q2.500 0 2.500-2.500V9M5.500 13v3M3 16.500h5"/></svg>
    <svg class="ml-[10px]" width="17" height="17" fill="none" stroke="#fff" stroke-width="1.200"><path d="M1 4q8 0 15-3v11M1 4v11h9"/><path d="M5 9q1-3 5-2M11 9q-1 4-5 2.500"/><circle cx="13" cy="13" r="3.600" fill="#2a72c8" stroke="none"/></svg>
    <svg class="ml-[8px]" width="17" height="15" fill="none" stroke="#fff" stroke-width="1.200"><path d="M6 2.500h10v7.500H4V6M10 10v4M6 14h8M1 1h4v4H1zM3 5v9"/></svg>
    <svg class="ml-[7px]" width="17" height="14" fill="none" stroke="#fff" stroke-width="1.200"><path d="M1 4.500h2.500L7 1.500v11L3.500 9.500H1zM9 5q1 2 0 4M11.500 3q2.500 4 0 8M14 1q4 6 0 12"/></svg>
    <span class="ml-[8px] w-[24px] text-[11.5px]">ENG</span>
    <div class="ml-[11px] w-[54px] text-center text-[12px] leading-[18px] tracking-[-0.2px] whitespace-nowrap">7:23 PM<br>4/3/2023</div>
    <div class="relative ml-[17px] h-[24px] w-[24px]"><svg width="16" height="17" class="mt-[2px]"><path d="M0 0h16v12H6l-3 4v-4H0z" fill="#fff"/><path d="M2.500 3.500h11M2.500 6h11M2.500 8.500h8" stroke="#222"/></svg><div class="absolute top-[9px] left-[8px] flex size-4 items-center justify-center rounded-full border border-[#999] bg-[#333] text-[11px]">1</div></div>
    <div class="mr-[4px] ml-auto h-[40px] w-px bg-[#6f6a68]"></div>
  </div>
</footer>

<script>
  // Per-status execution counters shown after a suite name
  const count = (n) => `(<span class="bg-[#e9e9e9] pl-[2px] pr-[3px] py-px">0,</span><span class="bg-[#d5eed5] pl-[2px] pr-[3px] py-px">${n},</span><span class="bg-[#eed5d5] pl-[2px] pr-[3px] py-px">0,</span><span class="bg-[#d5d5ee] px-[2px] py-px">0</span>)`;
  const rows = [
    ['root', 'Project_BledeaBretan / 931_BledeaBretan_TestPlan (22)', 22],
    ['suite', 'BledeaBretan_BBT (14)', 14],
    'TC_1_duplicate', 'TC_2_duplicate', 'TC_1_Name', 'TC_2_Name', 'TC_3_Name', 'TC_1_Group', 'TC_2_Group', 'TC_1_Email', 'TC_2_Email', 'TC_3_Email', 'TC_1_ID', 'TC_2_ID', 'TC_3_ID', 'TC_1_BVA',
    ['suite', 'BledeaBretan_WBT (8)', 8],
    'TC_1_ValidAssignment', 'TC_1_ID', 'TC_2_ID', 'TC_1_Description', 'TC_1_Deadline', 'TC_2_Deadline', 'TC_1_Received', 'TC_2_Received'
  ];
  let id = 0;
  document.getElementById('tree').innerHTML = rows.map((r) => {
    if (Array.isArray(r)) {
      const pad = r[0] === 'root' ? 'pl-[6px]' : 'pl-[22px]';
      return `<div class="flex h-[18px] items-center whitespace-nowrap ${pad}"><svg class="mt-px" width="7" height="7"><use href="#tri"/></svg><svg class="ml-[3px]" width="16" height="14"><use href="#folder"/></svg><span class="ml-[2px] pt-px leading-[17px] tracking-[0.23px]">${r[1]}${count(r[2])}</span></div>`;
    }
    id++;
    return `<div class="flex h-[18px] items-center whitespace-nowrap pl-[49px] ${id === 20 ? 'bg-[#d9e8fb]' : ''}"><svg class="mt-px" width="14" height="13"><use href="#leaf"/></svg><span class="ml-[3px] h-[17px] bg-[#d5eed5] pr-[3px] pl-[2px] leading-[18px] tracking-[0.14px]"><b>prj-${id}</b>:${r}</span></div>`;
  }).join('');

  // Starfield behind the tab strip
  let seed = 7;
  const rnd = () => (seed = (seed * 16807) % 2147483647) / 2147483647;
  let s = '';
  for (let i = 0; i < 330; i++) s += `<circle cx="${(rnd() * 1920).toFixed(0)}" cy="${(rnd() * 73).toFixed(0)}" r="${(0.4 + rnd() * rnd() * 0.9).toFixed(1)}" opacity="${(0.15 + rnd() * 0.5).toFixed(2)}"/>`;
  document.getElementById('stars').innerHTML = s;
</script>
</body>
</html>
